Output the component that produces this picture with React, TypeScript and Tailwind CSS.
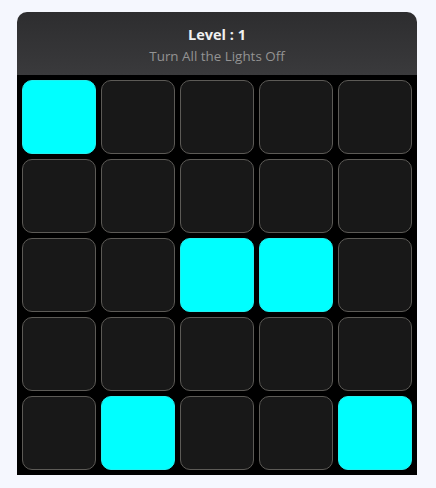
const board = [
  [1, 0, 0, 0, 0],
  [0, 0, 0, 0, 0],
  [0, 0, 1, 1, 0],
  [0, 0, 0, 0, 0],
  [0, 1, 0, 0, 1],
];

export default function App() {
  return (
    <div className="min-h-[488px] w-full bg-[#f5f7fe] pl-[17px] pt-[12px] font-['Open_Sans',sans-serif]">
      <div className="w-[400px]">
        <div className="flex h-[63px] flex-col items-center justify-center rounded-t-[10px] bg-gradient-to-b from-[#2d2d2f] to-[#3a3a3c] pt-[3px]">
          <h1 className="text-[14.5px] font-bold leading-5 text-[#f0f0f0]">Level : 1</h1>
          <p className="mt-[1px] text-[13.4px] leading-5 text-[#939393]">Turn All the Lights Off</p>
        </div>
        <div className="grid grid-cols-5 gap-[5px] bg-black p-[5px]">
          {board.flat().map((on, i) => (
            <div
              key={i}
              className={
                on
                  ? "h-[74px] w-[74px] rounded-[10px] border border-[#22eeee] bg-[#00ffff]"
                  : "h-[74px] w-[74px] rounded-[10px] border border-[#5c5a56] bg-[#181818]"
              }
            />
          ))}
        </div>
      </div>
    </div>
  );
}
